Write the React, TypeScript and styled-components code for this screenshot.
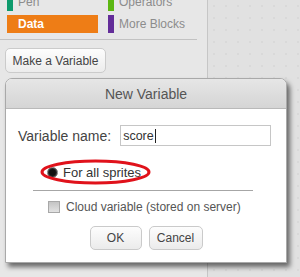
import React from 'react';
import styled, {createGlobalStyle} from 'styled-components';

const GlobalStyle = createGlobalStyle`
  html, body {
    margin: 0;
    padding: 0;
  }
  body {
    width: 300px;
    height: 277px;
    overflow: hidden;
    background: #e6e6e6;
    font-family: "Liberation Sans", Arial, sans-serif;
  }
`;

interface Category {
  label: string;
  color: string;
  active?: boolean;
}

const categories: Category[] = [
  {label: 'Pen', color: '#0e9a6c'},
  {label: 'Operators', color: '#5cb712'},
  {label: 'Data', color: '#ee7d16', active: true},
  {label: 'More Blocks', color: '#632d99'},
];

export default function App() {
  return (
    <>
      <GlobalStyle />
      <StyledStage>
        <StyledPalette>
          <StyledCategoryGrid>
            {categories.map((cat) => (
              <StyledCategory key={cat.label} $color={cat.color} $active={cat.active}>
                <StyledCategoryBar $color={cat.color} />
                <span>{cat.label}</span>
              </StyledCategory>
            ))}
          </StyledCategoryGrid>
          <StyledDivider />
          <StyledMakeButton>Make a Variable</StyledMakeButton>
        </StyledPalette>
        <StyledScriptArea />

        {/* 新規変数ダイアログ */}
        <StyledDialog>
          <StyledTitleBar>New Variable</StyledTitleBar>
          <StyledBody>
            <StyledNameRow>
              <StyledLabel>Variable name:</StyledLabel>
              <StyledField>
                score
                <StyledCaret />
              </StyledField>
            </StyledNameRow>
            <StyledOptions>
              <StyledRadioRow>
                <StyledRadio />
                <span>For all sprites</span>
                <StyledMark viewBox="0 0 111 26" width={111} height={26}>
                  <ellipse cx="55.5" cy="13" rx="53.5" ry="11" fill="none" stroke="#e0121b" strokeWidth="3" />
                </StyledMark>
              </StyledRadioRow>
              <StyledCheckRow>
                <StyledCheckbox />
                <span>Cloud variable (stored on server)</span>
              </StyledCheckRow>
            </StyledOptions>
            <StyledActions>
              <StyledDialogButton $width={52}>OK</StyledDialogButton>
              <StyledDialogButton $width={54}>Cancel</StyledDialogButton>
            </StyledActions>
          </StyledBody>
        </StyledDialog>
      </StyledStage>
    </>
  );
}

const StyledStage = styled.div`
  position: relative;
  display: flex;
  width: 300px;
  height: 277px;
  overflow: hidden;
`;

const StyledPalette = styled.div`
  width: 208px;
  flex-shrink: 0;
  background: #e7e7e7;
  border-right: 1px solid #c6c6c6;
  box-sizing: border-box;
`;

const StyledCategoryGrid = styled.div`
  display: grid;
  grid-template-columns: 91px 90px;
  grid-auto-rows: 18px;
  column-gap: 10px;
  row-gap: 4px;
  margin-top: -7px;
  padding-left: 7px;
`;

const StyledCategory = styled.div<{$color: string; $active?: boolean}>`
  display: flex;
  align-items: center;
  gap: 5px;
  font-size: 12px;
  color: ${({$active}) => ($active ? '#fff' : '#8c8c8c')};
  font-weight: ${({$active}) => ($active ? 'bold' : 'normal')};
  background: ${({$active, $color}) => ($active ? $color : 'transparent')};
`;

const StyledCategoryBar = styled.div<{$color: string}>`
  width: 6px;
  height: 100%;
  background: ${({$color}) => $color};
`;

const StyledDivider = styled.div`
  width: 197px;
  margin-top: 6px;
  border-top: 1px solid #c2c2c2;
`;

const StyledMakeButton = styled.div`
  display: flex;
  align-items: center;
  justify-content: center;
  width: 101px;
  height: 25px;
  margin: 8px 0 0 5px;
  box-sizing: border-box;
  border: 1px solid #cbcbcb;
  border-radius: 5px;
  background: linear-gradient(#fdfdfd, #ececec);
  font-size: 12px;
  color: #444;
`;

const StyledScriptArea = styled.div`
  flex: 1;
  background-color: #e1e1e1;
  background-image: radial-gradient(circle, #d9d9d9 1px, transparent 1.5px);
  background-size: 12px 12px;
`;

const StyledDialog = styled.div`
  position: absolute;
  left: 5px;
  top: 78px;
  width: 282px;
  height: 185px;
  box-sizing: border-box;
  border: 1px solid #a9a9a9;
  border-radius: 7px 7px 0 0;
  background: #fff;
  box-shadow: 3px 4px 5px rgba(0, 0, 0, 0.55);
  display: flex;
  flex-direction: column;
`;

const StyledTitleBar = styled.div`
  height: 30px;
  box-sizing: border-box;
  display: flex;
  align-items: center;
  justify-content: center;
  border-radius: 6px 6px 0 0;
  border-bottom: 1px solid #b9b9b9;
  background: linear-gradient(#e6e6e6, #d5d5d5);
  font-size: 14px;
  color: #555;
`;

const StyledBody = styled.div`
  display: flex;
  flex-direction: column;
  padding-top: 16px;
`;

const StyledNameRow = styled.div`
  display: flex;
  align-items: center;
  gap: 9px;
  padding-left: 12px;
`;

const StyledLabel = styled.span`
  font-size: 14px;
  color: #444;
`;

const StyledField = styled.div`
  display: flex;
  align-items: center;
  width: 151px;
  height: 21px;
  box-sizing: border-box;
  border: 1px solid #c6c6c6;
  padding-left: 2px;
  font-size: 12.5px;
  color: #333;
`;

const StyledCaret = styled.span`
  width: 1px;
  height: 14px;
  margin-left: 1px;
  background: #222;
`;

const StyledOptions = styled.div`
  width: 220px;
  margin: 18px 0 0 27px;
  display: flex;
  flex-direction: column;
`;

const StyledRadioRow = styled.div`
  position: relative;
  display: flex;
  align-items: center;
  gap: 5px;
  height: 16px;
  padding-left: 14px;
  padding-bottom: 10px;
  border-bottom: 1px solid #a6a6a6;
  font-size: 13px;
  color: #333;
`;

const StyledRadio = styled.span`
  width: 11px;
  height: 11px;
  box-sizing: border-box;
  border-radius: 50%;
  border: 1px solid #777;
  background: radial-gradient(circle, #111 45%, #3a3a3a 70%, #888 100%);
`;

const StyledMark = styled.svg`
  position: absolute;
  left: 7px;
  top: -5px;
`;

const StyledCheckRow = styled.div`
  display: flex;
  align-items: center;
  gap: 6px;
  height: 14px;
  margin-top: 9px;
  padding-left: 15px;
  font-size: 12px;
  color: #555;
`;

const StyledCheckbox = styled.span`
  width: 12px;
  height: 12px;
  box-sizing: border-box;
  border: 1px solid #a8a8a8;
  background: linear-gradient(#c4c4c4, #e2e2e2);
`;

const StyledActions = styled.div`
  display: flex;
  justify-content: center;
  gap: 7px;
  margin-top: 12px;
`;

const StyledDialogButton = styled.div<{$width: number}>`
  display: flex;
  align-items: center;
  justify-content: center;
  width: ${({$width}) => $width}px;
  height: 24px;
  box-sizing: border-box;
  border: 1px solid #cacaca;
  border-radius: 5px;
  background: linear-gradient(#fdfdfd, #ebebeb);
  font-size: 12px;
  color: #444;
`;
